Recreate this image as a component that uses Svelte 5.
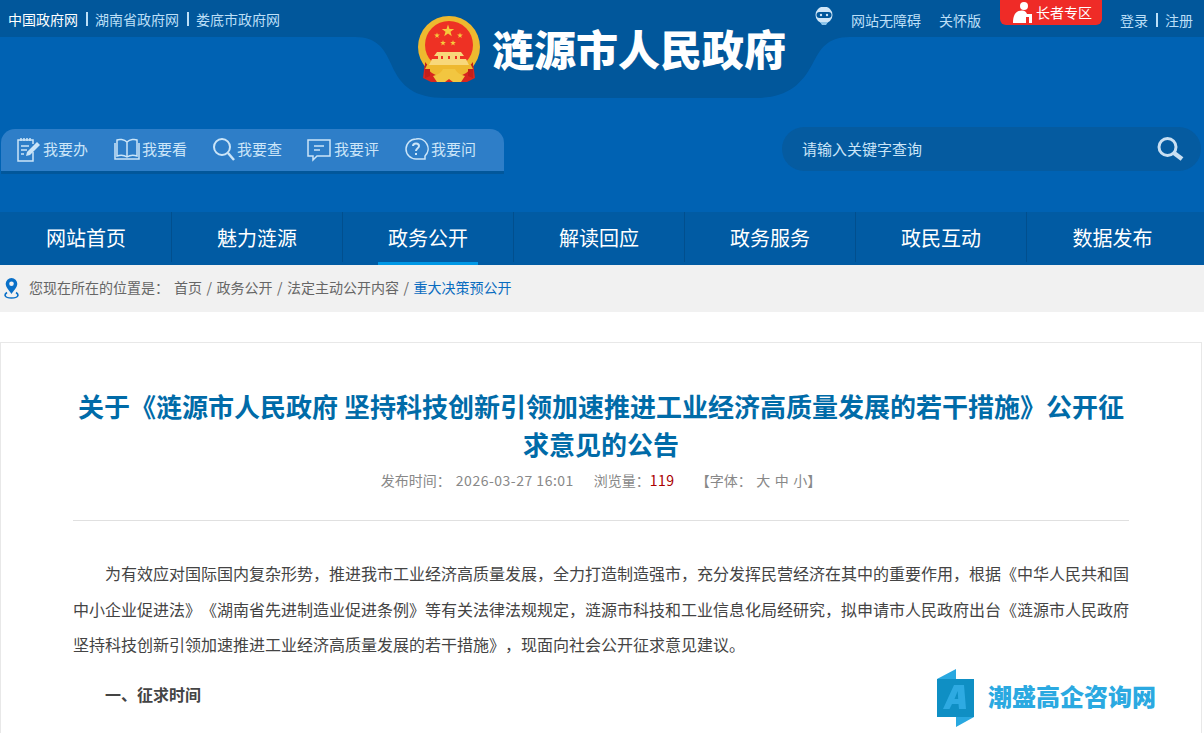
<script>
  const quick = [
    { name: '我要办', icon: 'do' },
    { name: '我要看', icon: 'book' },
    { name: '我要查', icon: 'find' },
    { name: '我要评', icon: 'chat' },
    { name: '我要问', icon: 'ask' }
  ];
  const nav = ['网站首页', '魅力涟源', '政务公开', '解读回应', '政务服务', '政民互动', '数据发布'];
  const crumbs = ['首页', '政务公开', '法定主动公开内容'];

  // five pointed star for the emblem
  const star = (cx, cy, r) => {
    const pts = [];
    for (let i = 0; i < 10; i++) {
      const rad = i % 2 ? r * 0.4 : r;
      const a = -Math.PI / 2 + (i * Math.PI) / 5;
      pts.push((cx + rad * Math.cos(a)).toFixed(1) + ',' + (cy + rad * Math.sin(a)).toFixed(1));
    }
    return pts.join(' ');
  };
  const stars = [[31, 15, 6.5], [20, 19.5, 3], [43, 19.5, 3], [26, 27, 3], [36, 27, 3]];
</script>

<div class="page">
  <header class="header">
    <svg class="backdrop" width="1204" height="100" viewBox="0 0 1204 100">
      <path d="M0 0H1204V37H850C826 37 820 50 813 63C801 86 786 98 755 98H445C414 98 401 86 392 66C385 50 378 37 355 37H0Z" fill="#01579b" />
    </svg>

    <div class="top">
      <div class="gov-links">
        <a class="first" href="#a">中国政府网</a><i></i><a href="#a">湖南省政府网</a><i></i><a href="#a">娄底市政府网</a>
      </div>
      <div class="top-right">
        <svg class="robot" width="20" height="18" viewBox="0 0 20 18">
          <circle cx="10" cy="8" r="8.5" fill="#cfe6f7" />
          <rect x="2.5" y="5" width="15" height="6" rx="3" fill="#01579b" />
          <circle cx="7" cy="8" r="1.2" fill="#cfe6f7" />
          <circle cx="13" cy="8" r="1.2" fill="#cfe6f7" />
          <path d="M6 15h8l-2 3H8Z" fill="#8cc4ea" />
        </svg>
        <a class="access" href="#a">网站无障碍</a>
        <a class="care" href="#a">关怀版</a>
        <a class="elder" href="#a">
          <svg width="22" height="23" viewBox="0 0 22 23">
            <circle cx="13" cy="5" r="4" fill="#fff" />
            <path d="M2 22C2 14 5 9.5 11 9.5C14 9.5 15 11 16 13H21V22H18V16H15V22Z" fill="#fff" />
          </svg>
          长者专区
        </a>
        <div class="login"><a href="#a">登录</a><i></i><a href="#a">注册</a></div>
      </div>
    </div>

    <div class="logo">
      <svg width="65" height="68" viewBox="0 0 65 68">
        <path d="M8 46L6 62L14 66H50L58 62L56 46Z" fill="#d8261f" />
        <circle cx="32" cy="31" r="31" fill="#eeb92f" />
        <circle cx="32" cy="29" r="24" fill="#ee3124" />
        {#each stars as s}
          <polygon points={star(s[0], s[1], s[2])} fill="#f6c93c" />
        {/each}
        <path d="M8 46L13 52V60L8 62ZM56 46L51 52V60L56 62Z" fill="#c41f1a" />
        <path d="M20 36H44L47 40H17ZM21 40H43V43H21ZM15 43H49L52 49H12Z" fill="#f8d87a" />
        <path d="M24 40h2v3h-2ZM31 40h2v3h-2ZM38 40h2v3h-2Z" fill="#ee3124" />
        <path d="M10 49H54L56 53H8Z" fill="#eeb92f" />
        <path d="M16 60Q24 58 26 53H38Q40 58 48 60L44 66H36L32 63L28 66H20Z" fill="#f2c640" />
      </svg>
      <span>涟源市人民政府</span>
    </div>

    <div class="tools">
      <div class="quick">
        {#each quick as q}
          <a class="quick-item" href="#a">
            <svg width="26" height="26" viewBox="0 0 26 26" fill="none" stroke="#cbe5f8" stroke-width="1.5">
              {#if q.icon === 'do'}
                <path d="M18 8V4H3V25H18V16M6 2V5M9 2V5M12 2V5M15 2V5M6 10H14M6 14H12M6 18H9" />
                <path d="M11 20L12 16L22 6L25 9L15 19Z" fill="#cbe5f8" stroke="none" />
              {:else if q.icon === 'book'}
                <path d="M13 6C10 3 5 3 3 4V20C6 19 10 19 13 21C16 19 20 19 23 20V4C21 3 16 3 13 6ZM13 6V21M1 7V23H25V7" />
              {:else if q.icon === 'find'}
                <circle cx="13" cy="11" r="8" stroke-width="2" />
                <path d="M19 17L25 24" stroke-width="2.5" />
              {:else if q.icon === 'chat'}
                <path d="M2 4H24V20H11L7 24V20H2ZM8 10H18M8 14H14" />
              {:else}
                <path d="M13 3A10 10 0 1 0 13 23H22V20A10 10 0 0 0 13 3Z" />
                <path d="M10 10C10 6.5 16 6.5 16 10C16 12.5 13 12 13 15" stroke-width="2" />
                <path d="M13 17V19" stroke-width="2" />
              {/if}
            </svg>
            {q.name}
          </a>
        {/each}
      </div>
      <div class="search">
        <span>请输入关键字查询</span>
        <svg width="27" height="25" viewBox="0 0 27 25" fill="none" stroke="#c9dff2">
          <circle cx="10.5" cy="10" r="8.5" stroke-width="3" />
          <path d="M17 16L25 22" stroke-width="4.5" />
        </svg>
      </div>
    </div>
  </header>

  <nav class="nav">
    {#each nav as item}
      <a class="nav-item" class:active={item === '政务公开'} href="#a"><span>{item}</span></a>
    {/each}
  </nav>

  <div class="crumbs">
    <svg width="15" height="21" viewBox="0 0 15 21">
      <path d="M7.5 0A5.8 5.8 0 0 0 1.7 5.8C1.7 9.5 5.5 12.5 7.5 16C9.5 12.5 13.3 9.5 13.3 5.8A5.8 5.8 0 0 0 7.5 0Z" fill="#0a70c8" />
      <circle cx="7.5" cy="5.8" r="2.3" fill="#f1f1f1" />
      <path d="M3 14.5C0 16.5 0 20 7.5 20S15 16.5 12 14.5" fill="none" stroke="#0a70c8" stroke-width="1.6" />
    </svg>
    <span class="where">您现在所在的位置是&#65306;</span>
    {#each crumbs as c}
      <a href="#a">{c}</a><em>/</em>
    {/each}
    <a class="current" href="#a">重大决策预公开</a>
  </div>

  <article class="card">
    <h1>关于《涟源市人民政府 坚持科技创新引领加速推进工业经济高质量发展的若干措施》公开征求意见的公告</h1>
    <div class="meta">
      <span>发布时间&#65306;</span>
      <span class="date">2026-03-27 16:01</span>
      <span class="views">浏览量&#65306;<b>119</b></span>
      <span class="size">【字体&#65306;<a href="#a">大</a><a href="#a">中</a><a href="#a">小</a>】</span>
    </div>
    <div class="body">
      <p>为有效应对国际国内复杂形势&#65292;推进我市工业经济高质量发展&#65292;全力打造制造强市&#65292;充分发挥民营经济在其中的重要作用&#65292;根据《中华人民共和国中小企业促进法》《湖南省先进制造业促进条例》等有关法律法规规定&#65292;涟源市科技和工业信息化局经研究&#65292;拟申请市人民政府出台《涟源市人民政府坚持科技创新引领加速推进工业经济高质量发展的若干措施》&#65292;现面向社会公开征求意见建议。</p>
      <p class="section">一、征求时间</p>
    </div>
  </article>

  <div class="mark">
    <svg width="38" height="58" viewBox="0 0 38 58">
      <path d="M19 0V10L0 10L19 0ZM19 48H37L19 58Z" fill="#29a8e0" />
      <rect y="10" width="37" height="38" fill="#0f8fc4" />
      <path d="M6 40L17 16H27L29 40H22L21.5 35H15L12.5 40ZM17.5 30H21.2L20.7 22Z" fill="#2eaae2" />
    </svg>
    <span>潮盛高企咨询网</span>
  </div>
</div>

<style>
  :global(body) {
    overflow: hidden;
    background: #fff;
  }

  .page {
    position: relative;
    height: 733px;
    overflow: hidden;
    font-family: "Noto Sans CJK SC", "Liberation Sans", sans-serif;
    text-spacing-trim: space-all;
    color: #333;
  }

  a {
    color: inherit;
    text-decoration: none;
  }

  .header {
    position: relative;
    height: 212px;
    background: #0062b3;
  }

  .backdrop {
    position: absolute;
    top: 0;
    left: 0;
  }

  .top {
    position: relative;
    display: flex;
    justify-content: space-between;
    height: 37px;
    padding-left: 8px;
    font-size: 14px;
    line-height: 20px;
    color: #bcdff7;
  }

  .gov-links {
    display: flex;
    align-items: center;
    height: 37px;
  }

  .gov-links i {
    width: 2px;
    height: 14px;
    margin: 0 7.5px;
    background: #bcdff7;
  }

  .gov-links .first {
    color: #fff;
  }

  .top-right {
    display: flex;
    align-items: flex-start;
    padding-right: 11px;
  }

  .robot {
    margin-top: 7px;
  }

  .access {
    margin: 10px 0 0 17px;
  }

  .care {
    margin: 10px 0 0 18px;
  }

  .elder {
    display: flex;
    align-items: center;
    gap: 3px;
    width: 102px;
    height: 25px;
    box-sizing: border-box;
    margin-left: 19px;
    padding: 0 0 1px 11px;
    border-radius: 0 0 6px 6px;
    background: #ef2b27;
    color: #fff;
  }

  .login {
    display: flex;
    align-items: center;
    height: 20px;
    margin: 10px 0 0 18px;
  }

  .login i {
    width: 2px;
    height: 14px;
    margin: 0 7.5px;
    background: #bcdff7;
  }

  .logo {
    position: absolute;
    top: 16px;
    left: 417px;
    display: flex;
    align-items: flex-start;
    gap: 10px;
    font-size: 42px;
    font-weight: 900;
    line-height: 64px;
    color: #fff;
    white-space: nowrap;
  }

  .tools {
    position: relative;
    display: flex;
    justify-content: space-between;
    align-items: flex-start;
    margin-top: 90px;
    padding: 0 3px 0 1px;
  }

  .quick {
    display: flex;
    align-items: center;
    width: 503px;
    height: 40px;
    margin-top: 2px;
    padding-bottom: 2px;
    border-radius: 14px 14px 0 0;
    border-bottom: 3px solid #01579b;
    background: #2e7ec8;
  }

  .quick-item {
    display: flex;
    align-items: center;
    gap: 2px;
    margin-left: 14px;
    font-size: 15px;
    line-height: 22px;
    color: #cbe5f8;
    white-space: nowrap;
  }

  .quick-item + .quick-item {
    margin-left: 24px;
  }

  .quick-item:nth-child(2) {
    margin-left: 26px;
  }

  .quick-item:nth-child(3) {
    margin-left: 22px;
  }

  .search {
    display: flex;
    justify-content: space-between;
    align-items: center;
    width: 419px;
    height: 44px;
    box-sizing: border-box;
    padding: 0 17px 0 20px;
    border-radius: 22px;
    background: #055ba0;
    font-size: 15px;
    color: #cbe5f8;
  }

  .search span {
    margin-bottom: 2px;
  }

  .nav {
    display: flex;
    height: 53px;
    padding-left: 1px;
    background: #015ba3;
  }

  .nav-item {
    flex: 0 0 171px;
    display: flex;
    justify-content: center;
    height: 50px;
    box-sizing: border-box;
    border-right: 1px solid #014f8e;
    font-size: 20px;
    line-height: 52px;
    color: #fff;
  }

  .nav-item:last-child {
    border-right: 0;
  }

  .nav-item span {
    height: 53px;
    padding: 0 10px;
    box-sizing: border-box;
  }

  .nav-item.active span {
    border-bottom: 3px solid #0098e6;
  }

  .crumbs {
    display: flex;
    align-items: center;
    height: 44px;
    padding: 0 0 3px 4px;
    background: #f1f1f1;
    font-size: 14px;
    color: #666;
  }

  .crumbs svg {
    margin-top: 3px;
  }

  .where {
    margin: 0 5px 0 10px;
  }

  .crumbs em {
    margin: 0 4.5px;
    font-style: normal;
  }

  .current {
    color: #0a6cc0;
  }

  .card {
    width: 1202px;
    height: 400px;
    box-sizing: border-box;
    margin-top: 30px;
    padding: 44px 72px 0;
    border: 1px solid #e8e8e8;
    border-bottom: 0;
  }

  h1 {
    margin: 0;
    font-size: 26px;
    font-weight: 700;
    line-height: 38px;
    text-align: center;
    color: #006ba8;
  }

  .meta {
    display: flex;
    justify-content: center;
    align-items: center;
    height: 20px;
    margin-top: 7px;
    padding-bottom: 30px;
    border-bottom: 1px solid #e0e0e0;
    font-size: 14px;
    line-height: 20px;
    color: #888;
  }

  .date {
    margin-left: 5px;
    letter-spacing: 0.5px;
  }

  .views {
    margin-left: 20px;
  }

  .views b {
    font-weight: 400;
    letter-spacing: 0.5px;
    color: #a00;
  }

  .size {
    margin-left: 21px;
  }

  .size a {
    margin-left: 4.5px;
  }

  .body {
    padding-top: 35px;
    font-size: 16px;
    line-height: 35.5px;
    color: #444;
  }

  .body p {
    margin: 0;
    text-indent: 32px;
    text-align: justify;
  }

  .body .section {
    margin-top: 14px;
    font-weight: 700;
  }

  .mark {
    position: absolute;
    top: 669px;
    left: 937px;
    display: flex;
    align-items: center;
    gap: 13px;
    font-size: 24px;
    font-weight: 900;
    color: #2ba9e1;
    white-space: nowrap;
  }

  .mark span {
    margin-bottom: 5px;
  }
</style>
